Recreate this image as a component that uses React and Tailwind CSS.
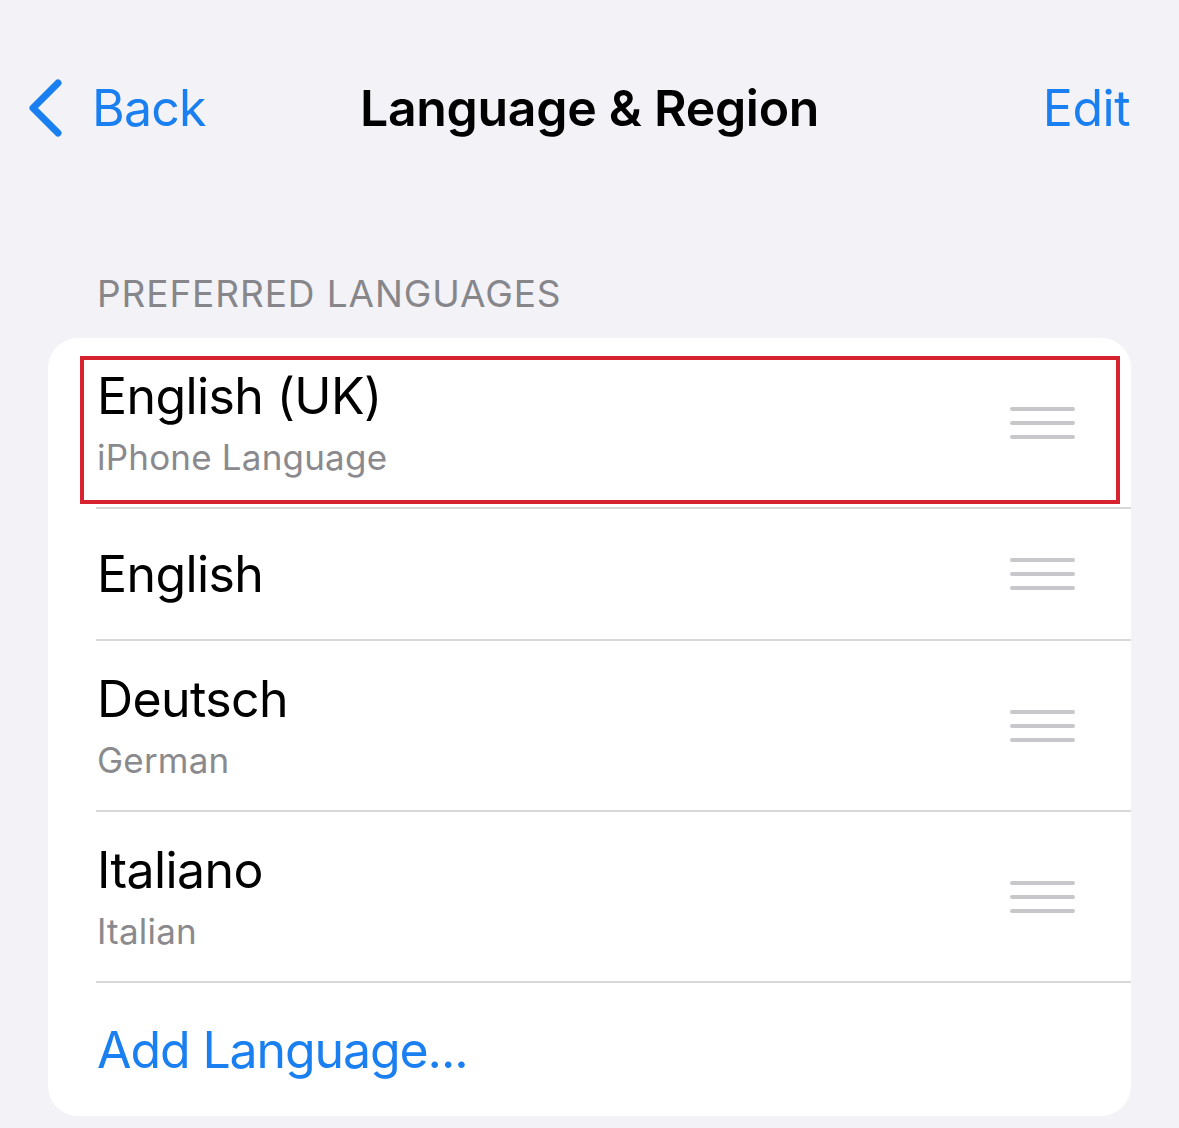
import React from 'react';

const font = { fontFamily: 'Inter, "Liberation Sans", sans-serif' };

// --- drag handle (three grey bars) ---
const Grabber = () => (
    <div className="flex flex-col gap-[10px] w-[65px] shrink-0">
        <span className="h-[4px] rounded-full bg-[#c7c7cc]"></span>
        <span className="h-[4px] rounded-full bg-[#c7c7cc]"></span>
        <span className="h-[4px] rounded-full bg-[#c7c7cc]"></span>
    </div>
);

const LanguageRow = ({ name, sub, highlight, last }) => (
    <div className={`relative ml-[48px] pr-[56px] flex items-center justify-between ${sub ? 'h-[171px]' : 'h-[132px]'} ${last ? '' : 'border-b-2 border-[#d8d8dc]'}`}>
        <div className="flex flex-col pl-[1px]">
            <span className="text-[50px] leading-none tracking-[-0.6px] text-black">{name}</span>
            {sub && <span className="mt-[19px] text-[35px] leading-none tracking-[0.2px] text-[#8a8a8e]">{sub}</span>}
        </div>
        <Grabber />
        {highlight && (
            <div className="absolute left-[-16px] right-[11px] top-[18px] bottom-[3px] border-[4px] border-[#d6232f]"></div>
        )}
    </div>
);

export default function App() {
    const languages = [
        { name: 'English (UK)', sub: 'iPhone Language', highlight: true },
        { name: 'English' },
        { name: 'Deutsch', sub: 'German' },
        { name: 'Italiano', sub: 'Italian' },
    ];

    return (
        <div className="w-[1179px] h-[1128px] bg-[#f2f2f7] overflow-hidden" style={font}>
            {/* nav bar */}
            <div className="pt-[60px] h-[155px] pl-[26px] pr-[49px] flex items-center justify-between relative">
                <div className="flex items-center gap-[28px] text-[#1a7ff0]">
                    <svg width="38" height="58" viewBox="0 0 38 58" fill="none">
                        <polyline points="32,4 7,29 32,54" stroke="#1a7ff0" strokeWidth="7" strokeLinecap="round" strokeLinejoin="round" />
                    </svg>
                    <span className="text-[50px] leading-none tracking-[-0.8px]">Back</span>
                </div>
                <span className="absolute left-0 right-0 text-center text-[50px] leading-none font-semibold tracking-[-0.3px] text-black pointer-events-none">Language &amp; Region</span>
                <span className="text-[50px] leading-none tracking-[-0.5px] text-[#1a7ff0]">Edit</span>
            </div>

            {/* section header */}
            <div className="mt-[120px] pl-[97px] text-[37px] leading-none tracking-[0.9px] text-[#86868b]">PREFERRED LANGUAGES</div>

            {/* list card */}
            <div className="mt-[26px] mx-[48px] bg-white rounded-[30px] overflow-hidden">
                {languages.map(lang => (
                    <LanguageRow key={lang.name} {...lang} />
                ))}
                <div className="ml-[48px] h-[133px] flex items-center pl-[1px]">
                    <span className="text-[50px] leading-none tracking-[-1.1px] text-[#1a7ff0]">Add Language...</span>
                </div>
            </div>
        </div>
    );
}
